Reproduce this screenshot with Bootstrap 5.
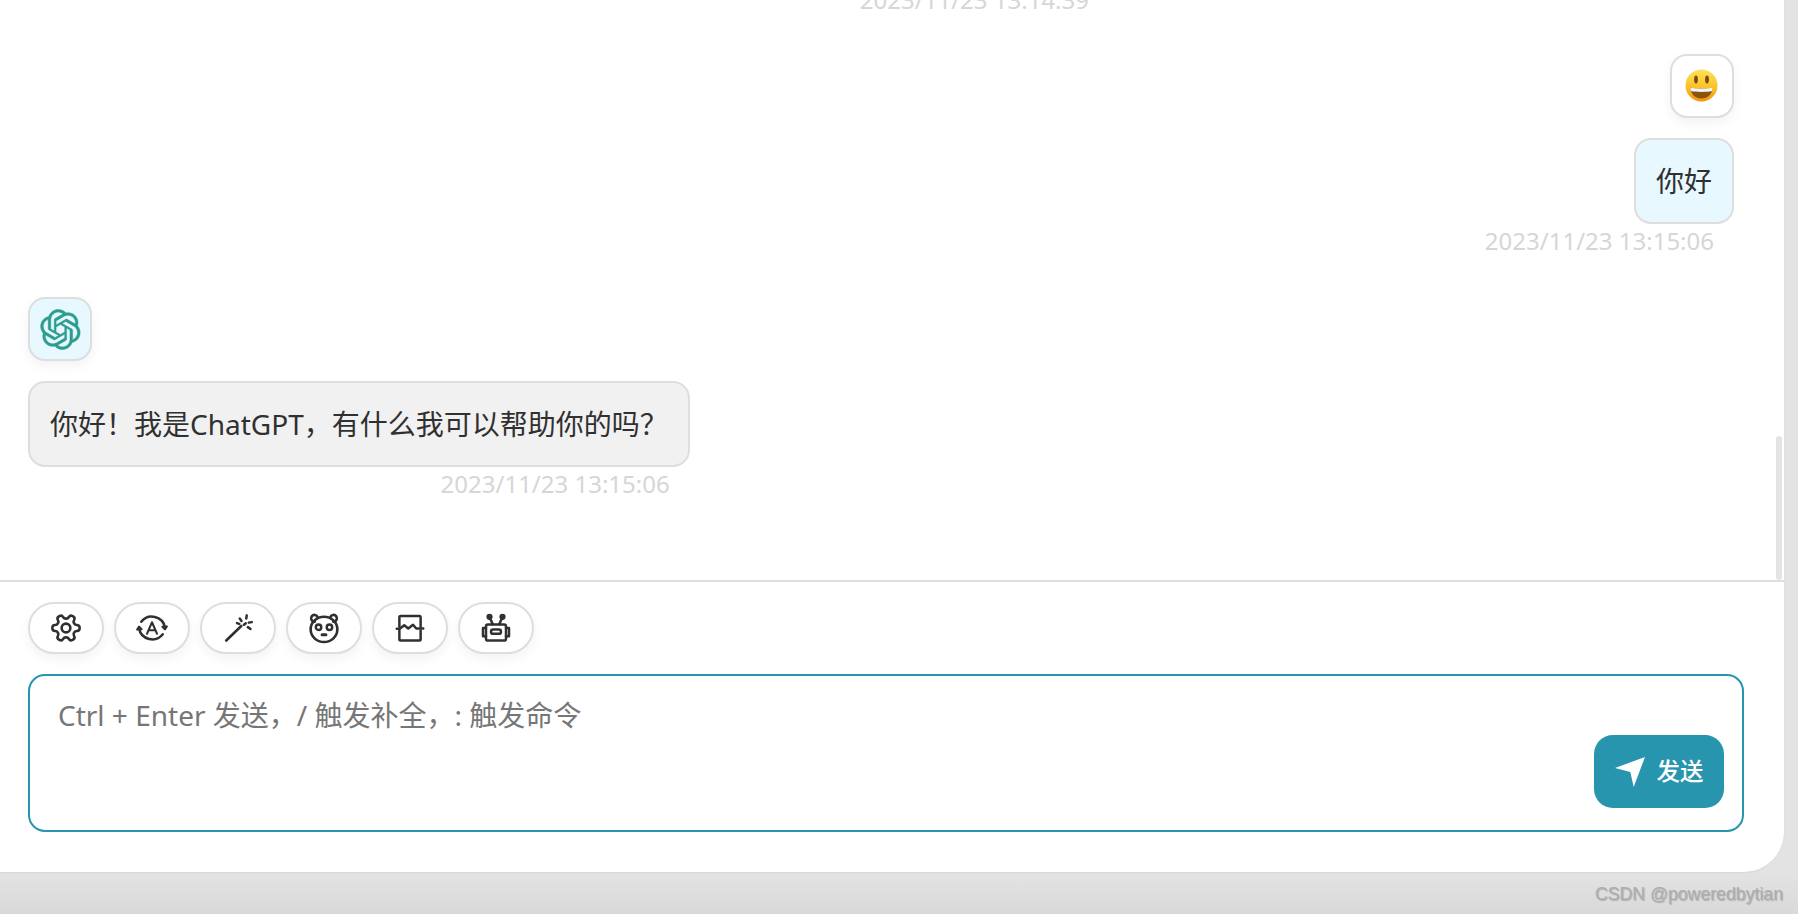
<!DOCTYPE html>
<html>
<head>
    <meta charset="UTF-8">
    <title>ChatGPT Next Web</title>
    <link href="https://cdn.jsdelivr.net/npm/bootstrap@5.3.0/dist/css/bootstrap.min.css" rel="stylesheet">
    <style>
        body {
            background: linear-gradient(#e3e3e3 872px, #d9d9d9 914px);
            font-family: "Noto Sans", "Noto Sans CJK SC", sans-serif;
            color: #303030;
        }
        .app-window {
            width: 1784px;
            height: 872px;
            background: #fff;
            border-bottom-right-radius: 40px;
            box-shadow: 0 1px 2px rgba(0,0,0,.06);
        }
        .msg-list {
            height: 582px;
            padding: 0 50px 79px 28px;
            border-bottom: 2px solid #dedede;
        }
        .msg-thumb {
            position: absolute;
            top: 436px;
            right: 2px;
            width: 6px;
            height: 144px;
            border-radius: 3px;
            background: #e4e4e4;
        }
        .msg-avatar {
            width: 64px;
            height: 64px;
            border: 2px solid #dedede;
            border-radius: 17px;
            box-shadow: 0 5px 12px rgba(0,0,0,.05);
            background: #fff;
        }
        .msg-avatar.avatar-bot { background: #e7f8ff; }
        .emoji-face { margin: 0 1px 1px 0; }
        .msg-bubble {
            margin-top: 20px;
            padding: 19px 20px;
            font-size: 28px;
            line-height: 44px;
            border: 2px solid #dedede;
            border-radius: 17px;
            background: #f1f1f1;
        }
        .msg-bubble.bubble-user { background: #e7f8ff; }
        .msg-time {
            padding-right: 20px;
            font-size: 24px;
            line-height: 34px;
            color: #d6d6d6;
            white-space: nowrap;
        }
        .time-old { padding-right: 645px; margin-bottom: 37px; }
        .time-user { margin-bottom: 39px; }
        .input-panel { padding: 20px 40px 40px 28px; }
        .tool-row { gap: 10px; }
        .tool-btn {
            width: 76px;
            height: 52px;
            padding: 0;
            border: 2px solid #dedede;
            border-radius: 26px;
            box-shadow: 0 5px 12px rgba(0,0,0,.05);
            background: #fff;
        }
        .tool-btn svg { width: 30px; height: 30px; overflow: visible; }
        .input-wrap { margin-top: 20px; }
        .chat-input {
            height: 158px;
            padding: 17px 28px;
            font-size: 28px;
            line-height: 44px;
            color: #303030;
            border: 2px solid #2795ad;
            border-radius: 17px;
            resize: none;
        }
        .chat-input::placeholder { color: #767676; opacity: 1; }
        .send-btn {
            position: absolute;
            right: 20px;
            bottom: 24px;
            width: 130px;
            height: 73px;
            padding: 0;
            gap: 12px;
            font-size: 23.5px;
            font-weight: 500;
            color: #fff;
            border: 0;
            border-radius: 19px;
            background: #2795ad;
        }
        .send-btn:hover { color: #fff; background: #2795ad; }
        .csdn-mark {
            position: absolute;
            right: 15px;
            bottom: 10px;
            font-family: "Liberation Sans", sans-serif;
            font-size: 17.7px;
            line-height: 20px;
            color: #adadad;
            text-shadow: 1px 1px 1px rgba(90,90,90,.35);
        }
    </style>
</head>
<body class="vh-100 overflow-hidden position-relative">
    <div class="app-window overflow-hidden d-flex flex-column">
        <div class="msg-list position-relative overflow-hidden d-flex flex-column justify-content-end flex-shrink-0">
            <div class="msg-thumb"></div>

            <div class="d-flex flex-column align-items-end">
                <div class="msg-time time-old">2023/11/23 13:14:39</div>
                <div class="msg-avatar d-flex align-items-center justify-content-center">
                    <svg class="emoji-face" width="33" height="33" viewBox="0 0 33 33">
                        <defs>
                            <linearGradient id="faceFill" x1="0" y1="0" x2="0" y2="1">
                                <stop offset="0" stop-color="#fde25a"/>
                                <stop offset=".6" stop-color="#fbbf24"/>
                                <stop offset="1" stop-color="#f0930f"/>
                            </linearGradient>
                        </defs>
                        <circle cx="16.5" cy="16.5" r="16" fill="url(#faceFill)"/>
                        <ellipse cx="11" cy="10.500" rx="1.900" ry="3.900" fill="#7a4a12"/>
                        <ellipse cx="22" cy="10.500" rx="1.900" ry="3.900" fill="#7a4a12"/>
                        <path d="M5.500 18.500C9 20 24 20 27.500 18.500C27.500 25 23 29.500 16.500 29.500S5.500 25 5.500 18.500Z" fill="#8a5410"/>
                        <path d="M5.500 18.500C9 20 24 20 27.500 18.500C27.600 20 27.300 21.200 27 22C22 23.200 11 23.200 6 22C5.700 21.200 5.400 20 5.500 18.500Z" fill="#f4f4f4"/>
                    </svg>
                </div>
                <div class="msg-bubble bubble-user">你好</div>
                <div class="msg-time time-user">2023/11/23 13:15:06</div>
            </div>

            <div class="d-flex flex-column align-items-start">
                <div class="msg-avatar avatar-bot d-flex align-items-center justify-content-center">
                    <svg width="41" height="41" viewBox="0 0 41 41">
                        <path fill="#2a9d8f" stroke="#2a9d8f" stroke-width=".5" d="M37.5324 16.8707C37.9808 15.5241 38.1363 14.0974 37.9886 12.6859C37.8409 11.2744 37.3934 9.91076 36.676 8.68622C35.6126 6.83404 33.9882 5.3676 32.0373 4.4985C30.0864 3.62941 27.9098 3.40259 25.8215 3.85078C24.8796 2.7893 23.7219 1.94125 22.4257 1.36341C21.1295 0.785575 19.7249 0.491269 18.3058 0.500197C16.1708 0.495044 14.0893 1.16803 12.3614 2.42214C10.6335 3.67624 9.34853 5.44666 8.6917 7.47815C7.30085 7.76286 5.98686 8.3414 4.8377 9.17505C3.68854 10.0087 2.73073 11.0782 2.02839 12.312C0.956464 14.1591 0.498905 16.2988 0.721698 18.4228C0.944492 20.5467 1.83612 22.5449 3.268 24.1293C2.81966 25.4759 2.66413 26.9026 2.81182 28.3141C2.95951 29.7256 3.40701 31.0892 4.12437 32.3138C5.18791 34.1659 6.8123 35.6322 8.76321 36.5013C10.7141 37.3704 12.8907 37.5973 14.9789 37.1492C15.9208 38.2107 17.0786 39.0587 18.3747 39.6366C19.6709 40.2144 21.0755 40.5087 22.4946 40.4998C24.6307 40.5054 26.7133 39.8321 28.4418 38.5772C30.1704 37.3223 31.4556 35.5506 32.1119 33.5179C33.5027 33.2332 34.8167 32.6547 35.9659 31.821C37.115 30.9874 38.0728 29.9178 38.7752 28.684C39.8458 26.8371 40.3023 24.6979 40.0789 22.5748C39.8556 20.4517 38.9639 18.4544 37.5324 16.8707ZM22.4978 37.8849C20.7443 37.8874 19.0459 37.2733 17.6994 36.1501C17.7601 36.117 17.8666 36.0586 17.936 36.0161L25.9004 31.4156C26.1003 31.3019 26.2663 31.137 26.3813 30.9378C26.4964 30.7386 26.5563 30.5124 26.5549 30.2825V19.0542L29.9213 20.998C29.9389 21.0068 29.9541 21.0198 29.9656 21.0359C29.977 21.052 29.9842 21.0707 29.9867 21.0902V30.3889C29.9842 32.375 29.1946 34.2791 27.7909 35.6841C26.3872 37.0892 24.4838 37.8806 22.4978 37.8849ZM6.39227 31.0064C5.51397 29.4888 5.19742 27.7107 5.49804 25.9832C5.55718 26.0187 5.66048 26.0818 5.73461 26.1244L13.699 30.7248C13.8975 30.8408 14.1233 30.902 14.3532 30.902C14.583 30.902 14.8088 30.8408 15.0073 30.7248L24.731 25.1103V28.9979C24.7321 29.0177 24.7283 29.0376 24.7199 29.0556C24.7115 29.0736 24.6988 29.0893 24.6829 29.1012L16.6317 33.7497C14.9096 34.7416 12.8643 35.0097 10.9447 34.4954C9.02506 33.9811 7.38785 32.7263 6.39227 31.0064ZM4.29707 13.6194C5.17156 12.0998 6.55279 10.9364 8.19885 10.3327C8.19885 10.4013 8.19491 10.5228 8.19491 10.6071V19.808C8.19351 20.0378 8.25334 20.2638 8.36823 20.4629C8.48312 20.6619 8.64893 20.8267 8.84863 20.9404L18.5723 26.5542L15.206 28.4979C15.1894 28.5089 15.1703 28.5155 15.1505 28.5173C15.1307 28.5191 15.1107 28.516 15.0924 28.5082L7.04046 23.8557C5.32135 22.8601 4.06716 21.2235 3.55289 19.3046C3.03862 17.3858 3.30624 15.3413 4.29707 13.6194ZM31.955 20.0556L22.2312 14.4411L25.5976 12.4981C25.6142 12.4872 25.6333 12.4805 25.6531 12.4787C25.6729 12.4769 25.6928 12.4801 25.7111 12.4879L33.7631 17.1364C34.9967 17.849 36.0017 18.8982 36.6606 20.1613C37.3194 21.4244 37.6047 22.849 37.4832 24.2684C37.3617 25.6878 36.8382 27.0432 35.9743 28.1759C35.1103 29.3086 33.9415 30.1717 32.6047 30.6641C32.6047 30.5947 32.6047 30.4733 32.6047 30.3889V21.188C32.6066 20.9586 32.5474 20.7328 32.4332 20.5338C32.319 20.3348 32.154 20.1698 31.955 20.0556ZM35.3055 15.0128C35.2464 14.9765 35.1431 14.9142 35.069 14.8717L27.1045 10.2712C26.906 10.1554 26.6803 10.0943 26.4504 10.0943C26.2206 10.0943 25.9948 10.1554 25.7963 10.2712L16.0726 15.8858V11.9982C16.0715 11.9783 16.0753 11.9585 16.0837 11.9405C16.0921 11.9225 16.1048 11.9068 16.1207 11.8949L24.1719 7.25025C25.4053 6.53903 26.8158 6.19376 28.2383 6.25482C29.6608 6.31589 31.0364 6.78077 32.2044 7.59508C33.3723 8.40939 34.2842 9.53945 34.8334 10.8531C35.3826 12.1667 35.5464 13.6095 35.3055 15.0128ZM14.2424 21.9419L10.8752 19.9981C10.8576 19.9893 10.8423 19.9763 10.8309 19.9602C10.8195 19.9441 10.8122 19.9254 10.8098 19.9058V10.6071C10.8107 9.18295 11.2173 7.78848 11.9819 6.58696C12.7466 5.38544 13.8377 4.42659 15.1275 3.82264C16.4173 3.21869 17.8524 2.99464 19.2649 3.1767C20.6775 3.35876 22.0089 3.93941 23.1034 4.85067C23.0427 4.88379 22.937 4.94215 22.8668 4.98473L14.9024 9.58517C14.7025 9.69878 14.5366 9.86356 14.4215 10.0626C14.3065 10.2616 14.2466 10.4877 14.2479 10.7175L14.2424 21.9419ZM16.071 17.9991L20.4018 15.4978L24.7325 17.9975V22.9985L20.4018 25.4983L16.071 22.9985V17.9991Z"/>
                    </svg>
                </div>
                <div class="d-inline-flex flex-column">
                    <div class="msg-bubble">你好！我是ChatGPT，有什么我可以帮助你的吗？</div>
                    <div class="msg-time align-self-end">2023/11/23 13:15:06</div>
                </div>
            </div>
        </div>

        <div class="input-panel">
            <div class="d-flex tool-row">
                <button class="btn tool-btn d-flex align-items-center justify-content-center" type="button">
                    <svg viewBox="1 1 22 22" fill="none" stroke="#303030" stroke-width="1.900" stroke-linecap="round" stroke-linejoin="round">
                        <path transform="rotate(90 12 12)" d="M12.22 2h-.44a2 2 0 0 0-2 2v.18a2 2 0 0 1-1 1.73l-.43.25a2 2 0 0 1-2 0l-.15-.08a2 2 0 0 0-2.73.73l-.22.38a2 2 0 0 0 .73 2.73l.15.1a2 2 0 0 1 1 1.72v.51a2 2 0 0 1-1 1.74l-.15.09a2 2 0 0 0-.73 2.73l.22.38a2 2 0 0 0 2.73.73l.15-.08a2 2 0 0 1 2 0l.43.25a2 2 0 0 1 1 1.73V20a2 2 0 0 0 2 2h.44a2 2 0 0 0 2-2v-.18a2 2 0 0 1 1-1.73l.43-.25a2 2 0 0 1 2 0l.15.08a2 2 0 0 0 2.73-.73l.22-.39a2 2 0 0 0-.73-2.73l-.15-.08a2 2 0 0 1-1-1.74v-.5a2 2 0 0 1 1-1.74l.15-.09a2 2 0 0 0 .73-2.73l-.22-.38a2 2 0 0 0-2.73-.73l-.15.08a2 2 0 0 1-2 0l-.43-.25a2 2 0 0 1-1-1.73V4a2 2 0 0 0-2-2z"/>
                        <circle cx="12" cy="12" r="3.200"/>
                    </svg>
                </button>
                <button class="btn tool-btn d-flex align-items-center justify-content-center" type="button">
                    <svg viewBox="0 0 24 24" fill="none" stroke="#303030" stroke-width="2" stroke-linecap="round" stroke-linejoin="round">
                        <path d="M3.400 7A10.800 10.800 0 0 1 22.400 11.500"/>
                        <path d="M20.600 17A10.800 10.800 0 0 1 1.600 12.500"/>
                        <path d="M20.400 11L22.400 13L23.800 10.800" stroke-width="1.800"/>
                        <path d="M3.600 13L1.600 11L.2 13.200" stroke-width="1.800"/>
                        <path d="M8 16.600L12 7.400L16 16.600M9.400 13.700H14.600" stroke-width="1.600"/>
                    </svg>
                </button>
                <button class="btn tool-btn d-flex align-items-center justify-content-center" type="button">
                    <svg viewBox="0 0 24 24" fill="none" stroke="#303030" stroke-width="2" stroke-linecap="round" stroke-linejoin="round">
                        <path d="M2.600 22L14.600 10.400" stroke-width="2.100"/>
                        <path d="M13.400 4.400L14.800 6.400M19 1.900L18.600 4.400M23 7.300L20.600 7.700M22 12.800L19.900 11.300M11.200 8.100L13 8.700M16.800 9.400L18.200 8.200"/>
                    </svg>
                </button>
                <button class="btn tool-btn d-flex align-items-center justify-content-center" type="button">
                    <svg viewBox="1 1 22 22" fill="none" stroke="#303030" stroke-width="1.900" stroke-linecap="round" stroke-linejoin="round">
                        <path d="M5.200 7.400C3.200 7.600 1.800 5.200 3 3.400C4.200 1.800 6.800 2.200 7.400 4.200"/>
                        <path d="M18.800 7.400C20.800 7.600 22.200 5.200 21 3.400C19.800 1.800 17.200 2.200 16.600 4.200"/>
                        <ellipse cx="12" cy="13" rx="9.800" ry="9.300"/>
                        <circle cx="8" cy="11.400" r="2" stroke-width="1.800"/>
                        <circle cx="16" cy="11.400" r="2" stroke-width="1.800"/>
                        <path d="M10.600 17H13.400" stroke-width="2.200"/>
                    </svg>
                </button>
                <button class="btn tool-btn d-flex align-items-center justify-content-center" type="button">
                    <svg viewBox="0 0 24 24" fill="none" stroke="#303030" stroke-width="2" stroke-linecap="round" stroke-linejoin="round">
                        <path d="M3.500 11V3.400A1 1 0 0 1 4.500 2.400H19.500A1 1 0 0 1 20.500 3.400V11"/>
                        <path d="M3.500 14V21A1 1 0 0 0 4.500 22H19.500A1 1 0 0 0 20.500 21V14"/>
                        <path d="M1.400 12.600H3.800L7.400 9.800L10.600 12.400L14.400 9.400L17 12.400H22.600"/>
                    </svg>
                </button>
                <button class="btn tool-btn d-flex align-items-center justify-content-center" type="button">
                    <svg viewBox="0 0 24 24" fill="none" stroke="#303030" stroke-width="2" stroke-linecap="round" stroke-linejoin="round">
                        <rect x="4" y="9.200" width="16" height="12.800" rx="1.500"/>
                        <rect x="8" y="13.200" width="8" height="3.400" rx="1.700"/>
                        <path d="M9.400 9L7.200 4M14.600 9L16.800 4"/>
                        <circle cx="6.800" cy="3" r="1.500" fill="#303030"/>
                        <circle cx="17.200" cy="3" r="1.500" fill="#303030"/>
                        <path d="M4 12H1.600V18.600H4M20 12H22.400V18.600H20"/>
                    </svg>
                </button>
            </div>
            <div class="input-wrap position-relative">
                <textarea class="form-control chat-input shadow-none" placeholder="Ctrl + Enter 发送，/ 触发补全，: 触发命令"></textarea>
                <button class="btn send-btn d-flex align-items-center justify-content-center" type="button">
                    <svg width="30" height="30" viewBox="0 0 30 30"><path fill="#fff" d="M30 0L18.700 30L15.300 15L0 11Z"/></svg>
                    <span>发送</span>
                </button>
            </div>
        </div>
    </div>
    <div class="csdn-mark">CSDN @poweredbytian</div>
</body>
</html>
